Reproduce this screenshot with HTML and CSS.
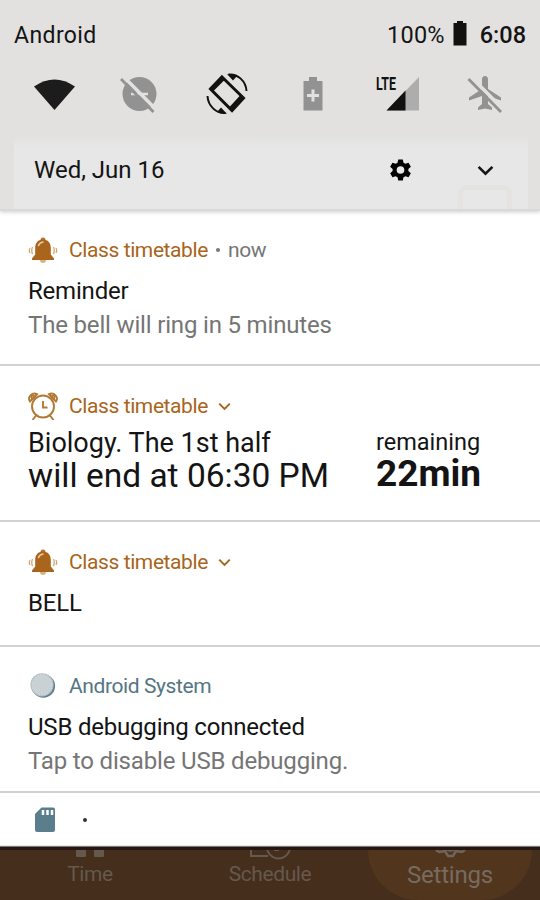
FILE: index.html
```
<!DOCTYPE html>
<html lang="en">
<head>
    <meta charset="UTF-8">
    <meta name="viewport" content="width=device-width, initial-scale=1.0">
    <title>Notifications</title>
    <link rel="stylesheet" href="styles.css">
</head>
<body>
    <svg class="defs" width="0" height="0">
        <symbol id="bell" viewBox="0 0 30 28">
            <circle cx="15" cy="24" r="3" fill="#d9b27c"/>
            <circle cx="15" cy="4" r="2.500" fill="#b5722a"/>
            <path d="M15 3.500c-5 0-7.800 3.500-7.800 8.500v6.500L4 22.500v1.500h22v-1.500l-3.200-4V12c0-5-2.800-8.500-7.800-8.500z" fill="#a8651b"/>
            <path d="M10.500 9.500c.8-2.200 2.200-3.200 4.500-3.500" fill="none" stroke="#e8cda4" stroke-width="1.500" stroke-linecap="round"/>
            <path d="M4.500 11q-1.500 3.500 0 7M2 12q-1.300 2.500 0 5M25.500 11q1.500 3.500 0 7M28 12q1.300 2.500 0 5" fill="none" stroke="#d2a772" stroke-width="1.300"/>
        </symbol>
        <symbol id="gear" viewBox="0 0 24 24">
            <path fill-rule="evenodd" d="M9.600 1h4.800l.7 3.400 2 1.100 3.300-1.100 2.400 4.200-2.600 2.300v2.200l2.600 2.300-2.400 4.200-3.300-1.100-2 1.100-.7 3.400H9.600l-.7-3.400-2-1.100-3.300 1.100-2.400-4.200 2.600-2.300v-2.200L1.200 8.600l2.400-4.200 3.300 1.100 2-1.100zM12 8a4 4 0 1 0 0 8 4 4 0 0 0 0-8z"/>
        </symbol>
        <symbol id="chevron" viewBox="0 0 16 10">
            <path d="M1.500 1.500 8 8l6.500-6.500" fill="none" stroke="currentColor" stroke-width="2.400"/>
        </symbol>
    </svg>

    <div class="quick-panel">
        <div class="status-bar">
            <span class="carrier">Android</span>
            <span class="battery-level">100%</span>
            <svg class="battery" width="14" height="25" viewBox="0 0 14 25"><path d="M4 0h6v2h3.500v22.500H.5V2H4z" fill="#111"/></svg>
            <span class="clock">6:08</span>
        </div>
        <div class="tiles">
            <svg width="44" height="44" viewBox="0 0 44 44"><path d="M2 14.500q20.500-14 41 0L22.500 38z" fill="#1c1c1c"/></svg>
            <svg width="44" height="44" viewBox="0 0 44 44">
                <circle cx="21.500" cy="22" r="17" fill="#929292"/>
                <path d="M13 22h17" stroke="#e2e1df" stroke-width="2.500"/>
                <path d="M5 4l32.500 33" stroke="#e2e1df" stroke-width="3.500"/>
                <path d="M3 7l32.500 33" stroke="#929292" stroke-width="2.800"/>
            </svg>
            <svg width="44" height="44" viewBox="0 0 44 44">
                <path d="M17 5 38.500 26 27 38.500 5.500 17z" fill="none" stroke="#111" stroke-width="3"/>
                <path d="M16.500 4 20 7.500 8 19.500 4.500 16zM35.500 23 39 26.500 27.500 39 24 35.500z" fill="#111"/>
                <path d="M23.500 2.500C32.500 1.500 41 9 41.500 19M20.500 41C11.500 42 3 34 2.500 24" fill="none" stroke="#111" stroke-width="2"/>
                <path d="M22 2l10 2-4 4.500zM22 42l-10-2 4-4.500z" fill="#111"/>
            </svg>
            <svg width="44" height="44" viewBox="0 0 44 44">
                <path d="M18 5h8v4h5.500v29.500h-19V9H18z" fill="#929292"/>
                <path d="M22 17.500v12M16 23.500h12" stroke="#e2e1df" stroke-width="3"/>
            </svg>
            <svg class="signal" width="44" height="44" viewBox="0 0 44 44">
                <path d="M41 5v33.500H8.500z" fill="#adadad"/>
                <path d="M27.500 18.500v20h-19z" fill="#111"/>
                <text class="lte" x="-2" y="18" textLength="20" lengthAdjust="spacingAndGlyphs">LTE</text>
            </svg>
            <svg width="44" height="44" viewBox="0 0 44 44">
                <path d="M21 4c2 0 3 1.500 3 3.500V17l13 8.500v3L24 24v8l4 3.500V38l-7-1.500-7 1.500v-2.500l4-3.500v-8L5 28.500v-3L18 17V7.500C18 5.500 19 4 21 4z" fill="#929292"/>
                <path d="M6 4l33 33" stroke="#e2e1df" stroke-width="3.500"/>
                <path d="M4.500 7l32.500 33" stroke="#929292" stroke-width="2.800"/>
            </svg>
        </div>
        <div class="date-row">
            <span class="date">Wed, Jun 16</span>
            <svg class="gear" width="23" height="24"><use href="#gear"/></svg>
            <svg class="expand" width="17" height="11"><use href="#chevron"/></svg>
            <div class="checkbox-shade"></div>
        </div>
    </div>

    <div class="notifications">
        <div class="notification reminder">
            <div class="header">
                <svg class="icon" width="30" height="28"><use href="#bell"/></svg>
                <span class="app">Class timetable</span>
                <span class="dot"></span>
                <span class="when">now</span>
            </div>
            <p class="title">Reminder</p>
            <p class="text">The bell will ring in 5 minutes</p>
        </div>

        <div class="notification lesson">
            <div class="header">
                <svg class="icon" width="30" height="28" viewBox="0 0 30 28" fill="none" stroke="#b37833" stroke-width="1.900">
                    <circle cx="15" cy="14.500" r="11"/>
                    <path d="M15 9v6.500h4.500M8 23.500 4.500 28M22 23.500l3.500 4.500"/>
                    <path d="M2 9.500C-1 5 4 0 9 2.200zM28 9.500C31 5 26 0 21 2.200z"/>
                    <circle cx="4.800" cy="5" r="1.500"/>
                    <circle cx="25.200" cy="5" r="1.500"/>
                </svg>
                <span class="app">Class timetable</span>
                <svg class="more" width="13" height="9"><use href="#chevron"/></svg>
            </div>
            <div class="lesson-body">
                <div class="lesson-info">
                    <p class="lesson-name">Biology. The 1st half</p>
                    <p class="lesson-end">will end at 06:30 PM</p>
                </div>
                <div class="remaining">
                    <p class="remaining-label">remaining</p>
                    <p class="remaining-time">22min</p>
                </div>
            </div>
        </div>

        <div class="notification bell-state">
            <div class="header">
                <svg class="icon" width="30" height="28"><use href="#bell"/></svg>
                <span class="app">Class timetable</span>
                <svg class="more" width="13" height="9"><use href="#chevron"/></svg>
            </div>
            <p class="title">BELL</p>
        </div>

        <div class="notification system">
            <div class="header">
                <svg class="icon" width="30" height="28" viewBox="0 0 30 28">
                    <circle cx="15.300" cy="14" r="11.800" fill="#60808d"/>
                    <circle cx="14" cy="12.800" r="11.600" fill="#b4c1c7"/>
                    <circle cx="14" cy="12.800" r="10" fill="#c9d1d5" stroke="#dbe2e5" stroke-dasharray="1.500 1.500"/>
                </svg>
                <span class="app">Android System</span>
            </div>
            <p class="title">USB debugging connected</p>
            <p class="text">Tap to disable USB debugging.</p>
        </div>

        <div class="notification storage">
            <svg width="22" height="26" viewBox="0 0 22 26">
                <path d="M7.500.5H19a2 2 0 0 1 2 2v20.500a2 2 0 0 1-2 2H3a2 2 0 0 1-2-2V7z" fill="#5b7e8c"/>
                <path d="M9 3v5M13.500 3v5M18 3v5" stroke="#fff" stroke-width="2.500"/>
            </svg>
            <span class="dot"></span>
        </div>
    </div>

    <div class="bottom-nav">
        <div class="tab">
            <svg width="60" height="10" viewBox="0 0 60 10"><path d="M16 0h10v6q0 1-1 1h-8q-1 0-1-1zM34 0h10v6q0 1-1 1h-8q-1 0-1-1z" fill="#65584d"/></svg>
            <span>Time</span>
        </div>
        <div class="tab">
            <svg width="60" height="10" viewBox="0 0 60 10" fill="none" stroke="#65584d" stroke-width="2"><path d="M11 0v6h17M34 0h5"/><path d="M27-3a11.500 11.500 0 0 0 23 0"/></svg>
            <span>Schedule</span>
        </div>
        <div class="tab active">
            <svg width="60" height="10" viewBox="0 0 60 10" fill="none" stroke="#70655a" stroke-width="2.500"><path d="M16 0l3 2 6-1 3 5h5l3-5 6 1 3-2M26-1q5 3 9 0"/></svg>
            <span>Settings</span>
        </div>
    </div>
</body>
</html>
```
FILE: styles.css
```
* {
    box-sizing: border-box;
}
body {
    margin: 0;
    width: 540px;
    height: 900px;
    overflow: hidden;
    display: flex;
    flex-direction: column;
    font-family: Roboto, sans-serif;
    background: #fff;
    color: #141414;
}
p {
    margin: 0;
    white-space: nowrap;
}
svg {
    display: block;
    flex: none;
}
.defs {
    position: absolute;
}
.quick-panel {
    height: 211px;
    background: #e2e1df;
    border-bottom: 2px solid #d9d9d9;
    box-shadow: 0 1px 4px #ccc;
}
.status-bar {
    display: flex;
    align-items: center;
    height: 70px;
    padding: 0 14px;
    font-size: 23px;
}
.carrier {
    flex: 1;
    letter-spacing: 0.4px;
}
.battery-level {
    font-size: 23.5px;
    letter-spacing: 0.2px;
}
.battery {
    margin: 0 13px 4px 8px;
}
.clock {
    font-size: 23.5px;
    font-weight: 500;
}
.tiles {
    display: flex;
    justify-content: space-between;
    height: 66px;
    padding: 2px 32px 0 32px;
}
.signal {
    overflow: visible;
}
.lte {
    font-size: 18px;
    font-weight: 700;
    fill: #111;
}
.date-row {
    position: relative;
    display: flex;
    align-items: center;
    height: 73px;
    margin: 0 12px 0 14px;
    padding: 0 34px 5px 20px;
    font-size: 24px;
    background: linear-gradient(#e2e1df, #e7e7e7 12px);
    overflow: hidden;
}
.date {
    flex: 1;
}
.expand {
    margin-left: 65px;
}
.checkbox-shade {
    position: absolute;
    right: 16px;
    bottom: -26px;
    width: 54px;
    height: 50px;
    border: 5px solid #e4e3df;
    border-radius: 9px;
}
.notification {
    padding: 26px 28px 0;
    border-bottom: 2px solid #d2d2d2;
}
.header {
    display: flex;
    align-items: center;
    height: 26px;
    font-size: 21px;
    letter-spacing: -0.4px;
    color: #a8651b;
}
.icon {
    margin-right: 11px;
}
.more {
    margin-left: 10px;
}
.dot {
    width: 4px;
    height: 4px;
    margin: 0 8px;
    border-radius: 50%;
    background: #777;
}
.when {
    color: #757575;
}
.title {
    margin-top: 11px;
    font-size: 24px;
    letter-spacing: -0.2px;
    line-height: 34px;
}
.text {
    font-size: 24px;
    letter-spacing: -0.17px;
    line-height: 34px;
    color: #757575;
}
.reminder {
    height: 155px;
}
.lesson {
    height: 156px;
    padding-top: 27px;
}
.lesson-body {
    display: flex;
    justify-content: space-between;
    padding-right: 31px;
}
.lesson-name {
    margin-top: 7px;
    font-size: 27px;
    line-height: 34px;
}
.lesson-end {
    font-size: 33.5px;
    line-height: 32px;
}
.remaining-label {
    margin-top: 9px;
    font-size: 23.5px;
    line-height: 28px;
}
.remaining-time {
    font-size: 37px;
    font-weight: 700;
    line-height: 36px;
}
.bell-state {
    height: 125px;
    padding-top: 27px;
}
.system {
    height: 146px;
}
.system .header {
    color: #537683;
}
.storage {
    display: flex;
    align-items: center;
    height: 54px;
    padding: 0 34px;
    border-bottom: 0;
}
.storage .dot {
    margin-left: 27px;
    background: #333;
}
.bottom-nav {
    display: flex;
    height: 53px;
    border-top: 3px solid #281710;
    background: #452e1b;
    box-shadow: 0 -1px 1px #777;
}
.tab {
    display: flex;
    flex: 1;
    flex-direction: column;
    align-items: center;
    font-size: 21px;
    letter-spacing: -0.4px;
    line-height: 28px;
    color: #65584d;
}
.active {
    flex: none;
    width: 164px;
    margin: 0 8px;
    border-radius: 0 0 50px 50px;
    background: #51351d;
    color: #776b60;
    font-size: 24px;
    letter-spacing: -0.2px;
    line-height: 31px;
}
```
